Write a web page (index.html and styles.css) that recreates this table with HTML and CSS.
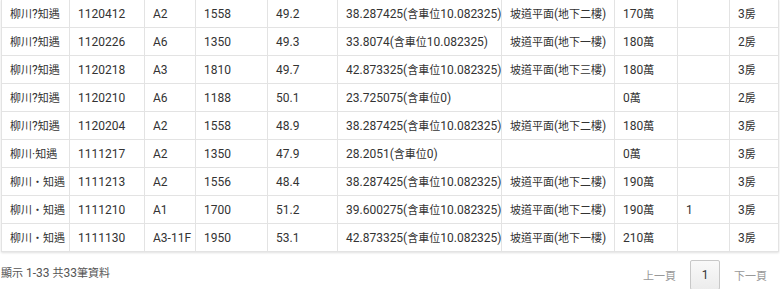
FILE: index.html
```html
<!DOCTYPE html>
<html>
<head>
<meta charset="utf-8">
<link rel="stylesheet" href="styles.css">
</head>
<body>
<div class="wrap">
<table class="grid">
<colgroup>
<col class="c1"><col class="c2"><col class="c3"><col class="c4"><col class="c5"><col class="c6"><col class="c7"><col class="c8"><col class="c9"><col class="c10">
</colgroup>
<tbody>
<tr><td><span class="zh">柳川</span>?<span class="zh">知遇</span></td><td>1120412</td><td>A2</td><td>1558</td><td>49.2</td><td>38.287425(<span class="zh">含車位</span>10.082325)</td><td><span class="zh">坡道平面</span>(<span class="zh">地下二樓</span>)</td><td>170<span class="zh">萬</span></td><td></td><td>3<span class="zh">房</span></td></tr>
<tr><td><span class="zh">柳川</span>?<span class="zh">知遇</span></td><td>1120226</td><td>A6</td><td>1350</td><td>49.3</td><td>33.8074(<span class="zh">含車位</span>10.082325)</td><td><span class="zh">坡道平面</span>(<span class="zh">地下一樓</span>)</td><td>180<span class="zh">萬</span></td><td></td><td>2<span class="zh">房</span></td></tr>
<tr><td><span class="zh">柳川</span>?<span class="zh">知遇</span></td><td>1120218</td><td>A3</td><td>1810</td><td>49.7</td><td>42.873325(<span class="zh">含車位</span>10.082325)</td><td><span class="zh">坡道平面</span>(<span class="zh">地下三樓</span>)</td><td>180<span class="zh">萬</span></td><td></td><td>3<span class="zh">房</span></td></tr>
<tr><td><span class="zh">柳川</span>?<span class="zh">知遇</span></td><td>1120210</td><td>A6</td><td>1188</td><td>50.1</td><td>23.725075(<span class="zh">含車位</span>0)</td><td></td><td>0<span class="zh">萬</span></td><td></td><td>2<span class="zh">房</span></td></tr>
<tr><td><span class="zh">柳川</span>?<span class="zh">知遇</span></td><td>1120204</td><td>A2</td><td>1558</td><td>48.9</td><td>38.287425(<span class="zh">含車位</span>10.082325)</td><td><span class="zh">坡道平面</span>(<span class="zh">地下二樓</span>)</td><td>180<span class="zh">萬</span></td><td></td><td>3<span class="zh">房</span></td></tr>
<tr><td><span class="zh">柳川</span>·<span class="zh">知遇</span></td><td>1111217</td><td>A2</td><td>1350</td><td>47.9</td><td>28.2051(<span class="zh">含車位</span>0)</td><td></td><td>0<span class="zh">萬</span></td><td></td><td>3<span class="zh">房</span></td></tr>
<tr><td><span class="zh">柳川・知遇</span></td><td>1111213</td><td>A2</td><td>1556</td><td>48.4</td><td>38.287425(<span class="zh">含車位</span>10.082325)</td><td><span class="zh">坡道平面</span>(<span class="zh">地下二樓</span>)</td><td>190<span class="zh">萬</span></td><td></td><td>3<span class="zh">房</span></td></tr>
<tr><td><span class="zh">柳川・知遇</span></td><td>1111210</td><td>A1</td><td>1700</td><td>51.2</td><td>39.600275(<span class="zh">含車位</span>10.082325)</td><td><span class="zh">坡道平面</span>(<span class="zh">地下二樓</span>)</td><td>190<span class="zh">萬</span></td><td>1</td><td>3<span class="zh">房</span></td></tr>
<tr><td><span class="zh">柳川・知遇</span></td><td>1111130</td><td>A3-11F</td><td>1950</td><td>53.1</td><td>42.873325(<span class="zh">含車位</span>10.082325)</td><td><span class="zh">坡道平面</span>(<span class="zh">地下一樓</span>)</td><td>210<span class="zh">萬</span></td><td></td><td>3<span class="zh">房</span></td></tr>
</tbody>
</table>
<div class="footer">
<div class="info"><span class="zh">顯示</span> 1-33 <span class="zh">共</span>33<span class="zh">筆資料</span></div>
<div class="pager">
<span class="pg-link zh">上一頁</span>
<span class="pg-cur">1</span>
<span class="pg-link zh">下一頁</span>
</div>
</div>
</div>
</body>
</html>
```
FILE: styles.css
```css
html, body {
  margin: 0;
  padding: 0;
  background: #fff;
}
body {
  font-family: Roboto, "Noto Sans CJK TC", sans-serif;
  font-size: 12px;
  line-height: 16px;
  color: #333;
}
.zh {
  font-family: "Noto Sans CJK TC", sans-serif;
  font-size: 11px;
  line-height: 14px;
}
.wrap {
  width: 778px;
  margin-left: 1px;
  margin-top: -1px;
}
.grid {
  border-collapse: collapse;
  table-layout: fixed;
  width: 777px;
  box-shadow: 0 1px 2px rgba(0,0,0,0.12);
}
.c1 { width: 68px; }
.c2 { width: 75px; }
.c3 { width: 51px; }
.c4 { width: 72px; }
.c5 { width: 70px; }
.c6 { width: 164px; }
.c7 { width: 113px; }
.c8 { width: 63px; }
.c9 { width: 52px; }
.c10 { width: 49px; }
.grid td {
  border: 1px solid #e3e3e3;
  height: 27px;
  padding: 0 8px;
  white-space: nowrap;
  overflow: hidden;
  line-height: 16px;
  vertical-align: middle;
}
.footer {
  display: flex;
  justify-content: space-between;
  align-items: flex-start;
  height: 37px;
  overflow: hidden;
}
.info {
  color: #555;
  margin-top: 13px;
}
.pager {
  display: flex;
  align-items: center;
  gap: 14px;
  margin-right: 12px;
  margin-top: 8px;
}
.pg-link {
  color: #999;
}
.pg-cur {
  display: inline-block;
  width: 28px;
  height: 28px;
  line-height: 28px;
  text-align: center;
  border: 1px solid #c8c8c8;
  border-radius: 2px;
  background: linear-gradient(#f9f9f9, #ececec);
  color: #333;
  font-size: 12px;
}
```
